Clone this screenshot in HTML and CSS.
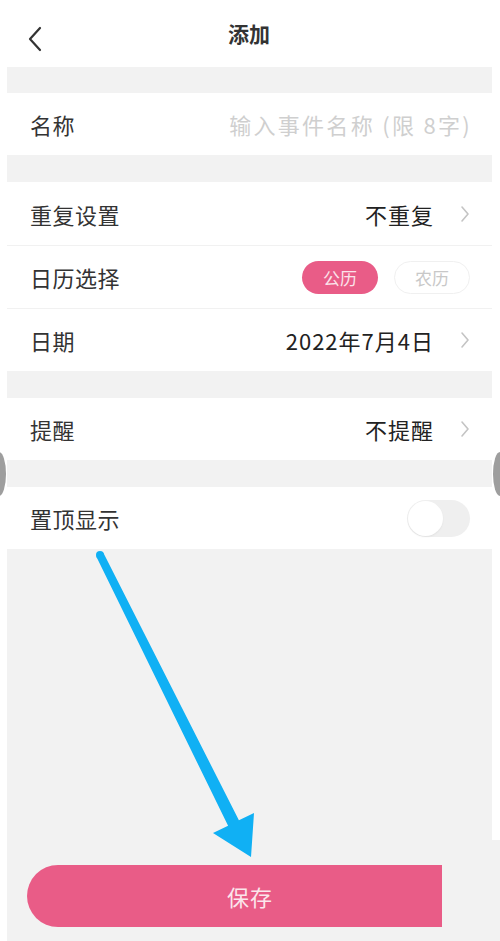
FILE: index.html
```html
<!DOCTYPE html>
<html lang="zh-CN">
<head>
<meta charset="utf-8">
<title>添加</title>
<link rel="stylesheet" href="styles.css">
</head>
<body>
<div class="page">
  <header class="header">
    <svg class="back" width="16" height="26" viewBox="0 0 16 26"><path d="M13 2 L3 13 L13 24" fill="none" stroke="#333" stroke-width="2.2" stroke-linecap="round" stroke-linejoin="round"/></svg>
    <h1 class="title">添加</h1>
  </header>
  <main class="main">
    <div class="gap"></div>
    <section class="group">
      <div class="row">
        <span class="label">名称</span>
        <span class="placeholder">输入事件名称 (限 8字)</span>
      </div>
    </section>
    <div class="gap"></div>
    <section class="group group-tall">
      <div class="row">
        <span class="label">重复设置</span>
        <span class="value">不重复</span>
        <svg class="chev" width="10" height="18" viewBox="0 0 10 18"><path d="M2 2 L8 9 L2 16" fill="none" stroke="#c4c4c4" stroke-width="1.6" stroke-linecap="round" stroke-linejoin="round"/></svg>
      </div>
      <div class="row">
        <span class="label">日历选择</span>
        <div class="pills">
          <span class="pill pill-on">公历</span>
          <span class="pill pill-off">农历</span>
        </div>
      </div>
      <div class="row">
        <span class="label">日期</span>
        <span class="value">2022年7月4日</span>
        <svg class="chev" width="10" height="18" viewBox="0 0 10 18"><path d="M2 2 L8 9 L2 16" fill="none" stroke="#c4c4c4" stroke-width="1.6" stroke-linecap="round" stroke-linejoin="round"/></svg>
      </div>
    </section>
    <div class="gap"></div>
    <section class="group">
      <div class="row">
        <span class="label">提醒</span>
        <span class="value">不提醒</span>
        <svg class="chev" width="10" height="18" viewBox="0 0 10 18"><path d="M2 2 L8 9 L2 16" fill="none" stroke="#c4c4c4" stroke-width="1.6" stroke-linecap="round" stroke-linejoin="round"/></svg>
      </div>
    </section>
    <div class="gap"></div>
    <section class="group">
      <div class="row">
        <span class="label">置顶显示</span>
        <span class="toggle"><span class="knob"></span></span>
      </div>
    </section>
  </main>
  <footer class="footer">
    <button class="save">保存</button>
  </footer>
  <span class="edge edge-left"></span>
  <span class="edge edge-right"></span>
  <svg class="arrow" width="500" height="941" viewBox="0 0 500 941">
    <circle cx="100" cy="555" r="4" fill="#10b0f4"/>
    <polygon points="103.6,553.2 238.9,820.3 254,813 251,857 213,833 228.1,825.7 96.4,556.8" fill="#10b0f4"/>
  </svg>
</div>
</body>
</html>
```
FILE: styles.css
```css
* { box-sizing: border-box; }
html, body { margin: 0; padding: 0; }
body {
  background: #fff;
  font-family: "Noto Sans CJK SC", "Noto Sans", sans-serif;
  color: #333;
}
.page {
  position: relative;
  width: 500px;
  height: 941px;
  display: flex;
  flex-direction: column;
  overflow: hidden;
}
.header {
  height: 67px;
  flex: none;
  display: flex;
  align-items: center;
  justify-content: center;
  position: relative;
}
.back {
  position: absolute;
  left: 27px;
  top: 26px;
}
.title {
  margin: 0;
  font-size: 21px;
  font-weight: 700;
  color: #333;
  margin-left: -2px;
  margin-top: -1px;
}
.main {
  flex: 1;
  margin: 0 8px 0 7px;
  background: #f2f2f2;
  display: flex;
  flex-direction: column;
}
.gap { height: 27px; flex: none; }
.gap:first-child { height: 26px; }
.group { background: #fff; margin: 0 -8px 0 -7px; padding: 0 8px 0 7px; }
.row {
  height: 62px;
  display: flex;
  align-items: center;
  padding: 0 22px 0 23px;
  border-top: 1px solid #f1f1f1;
}
.row:first-child { border-top: none; }
.group-tall .row { height: 63px; }
.label {
  font-size: 22px;
  color: #333;
  flex: 1;
  letter-spacing: 0.5px;
}
.placeholder {
  font-size: 22px;
  color: #cfcfcf;
  letter-spacing: 2.3px;
  margin-right: -2px;
}
.value {
  font-size: 22px;
  color: #222;
  letter-spacing: 1px;
  margin-right: 26px;
}
.chev { flex: none; }
.pills { display: flex; gap: 16px; }
.pill {
  width: 76px;
  height: 33px;
  border-radius: 17px;
  display: flex;
  align-items: center;
  justify-content: center;
  font-size: 17px;
}
.pill-on { background: #e95c87; color: #fbe3ea; }
.pill-off { border: 1px solid #f0f0f0; color: #c8c8c8; background: #fff; }
.toggle {
  width: 63px;
  height: 37px;
  border-radius: 19px;
  background: #efefef;
  position: relative;
  flex: none;
}
.knob {
  position: absolute;
  left: 1px;
  top: 1px;
  width: 35px;
  height: 35px;
  border-radius: 50%;
  background: #fff;
  box-shadow: 0 1px 2px rgba(0,0,0,0.06);
}
.footer {
  height: 101px;
  flex: none;
  margin-left: 7px;
  background: #f2f2f2;
  padding: 25px 0 0 20px;
}
.save {
  width: 415px;
  height: 62px;
  border: none;
  border-radius: 31px 0 0 31px;
  background: #e95c87;
  color: #fbe6ec;
  font-family: "Noto Sans CJK SC", "Noto Sans", sans-serif;
  font-size: 22px;
  padding: 0 0 0 31px;
  letter-spacing: 1px;
}
.edge {
  position: absolute;
  top: 452px;
  width: 14px;
  height: 44px;
  border-radius: 50%;
  background: #9e9e9e;
}
.edge-left { left: -8px; }
.edge-right { right: -7px; }
.arrow {
  position: absolute;
  left: 0;
  top: 0;
  pointer-events: none;
}
```
